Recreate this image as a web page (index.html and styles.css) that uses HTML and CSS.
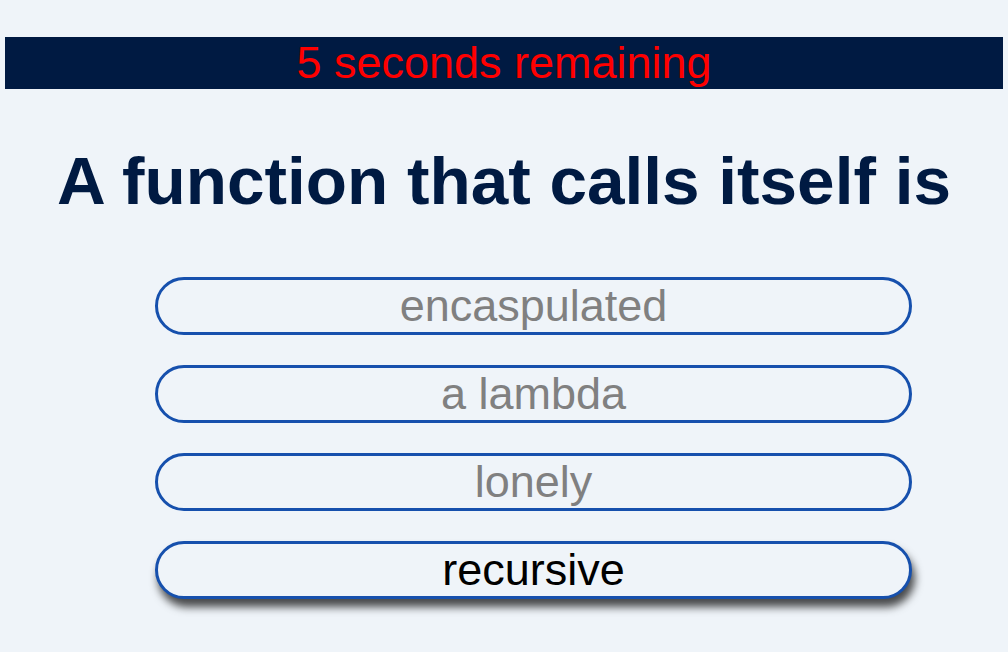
FILE: index.html
```html
<!DOCTYPE html>
<html>
<head>
<meta charset="utf-8">
<link rel="stylesheet" href="styles.css">
</head>
<body>
<div class="page">
  <div class="timer">5 seconds remaining</div>
  <h1 class="question">A function that calls itself is</h1>
  <div class="answers">
    <button class="answer">encaspulated</button>
    <button class="answer">a lambda</button>
    <button class="answer">lonely</button>
    <button class="answer hovered">recursive</button>
  </div>
</div>
</body>
</html>
```
FILE: styles.css
```css
html, body {
  margin: 0;
  padding: 0;
  background: #eff4f9;
  font-family: "Liberation Sans", Arial, sans-serif;
}
.page {
  padding: 37px 5px 30px 5px;
}
.timer {
  background: #001a42;
  color: #ff0000;
  font-size: 45px;
  text-align: center;
}
.question {
  margin: 53px 0 0 0;
  font-size: 67.5px;
  font-weight: bold;
  color: #001a42;
  text-align: center;
}
.answers {
  display: flex;
  flex-direction: column;
  gap: 30px;
  margin-top: 58px;
  padding-left: 150px;
}
.answer {
  width: 757px;
  height: 58px;
  box-sizing: border-box;
  border: 3px solid #1650ad;
  border-radius: 29px;
  background: #eff4f9;
  color: #808080;
  font-family: "Liberation Sans", Arial, sans-serif;
  font-size: 45px;
  line-height: 52px;
  padding: 0;
  text-align: center;
}
.answer.hovered {
  color: #000000;
  box-shadow: 3px 8px 8px rgba(0, 0, 0, 0.7);
}
```
